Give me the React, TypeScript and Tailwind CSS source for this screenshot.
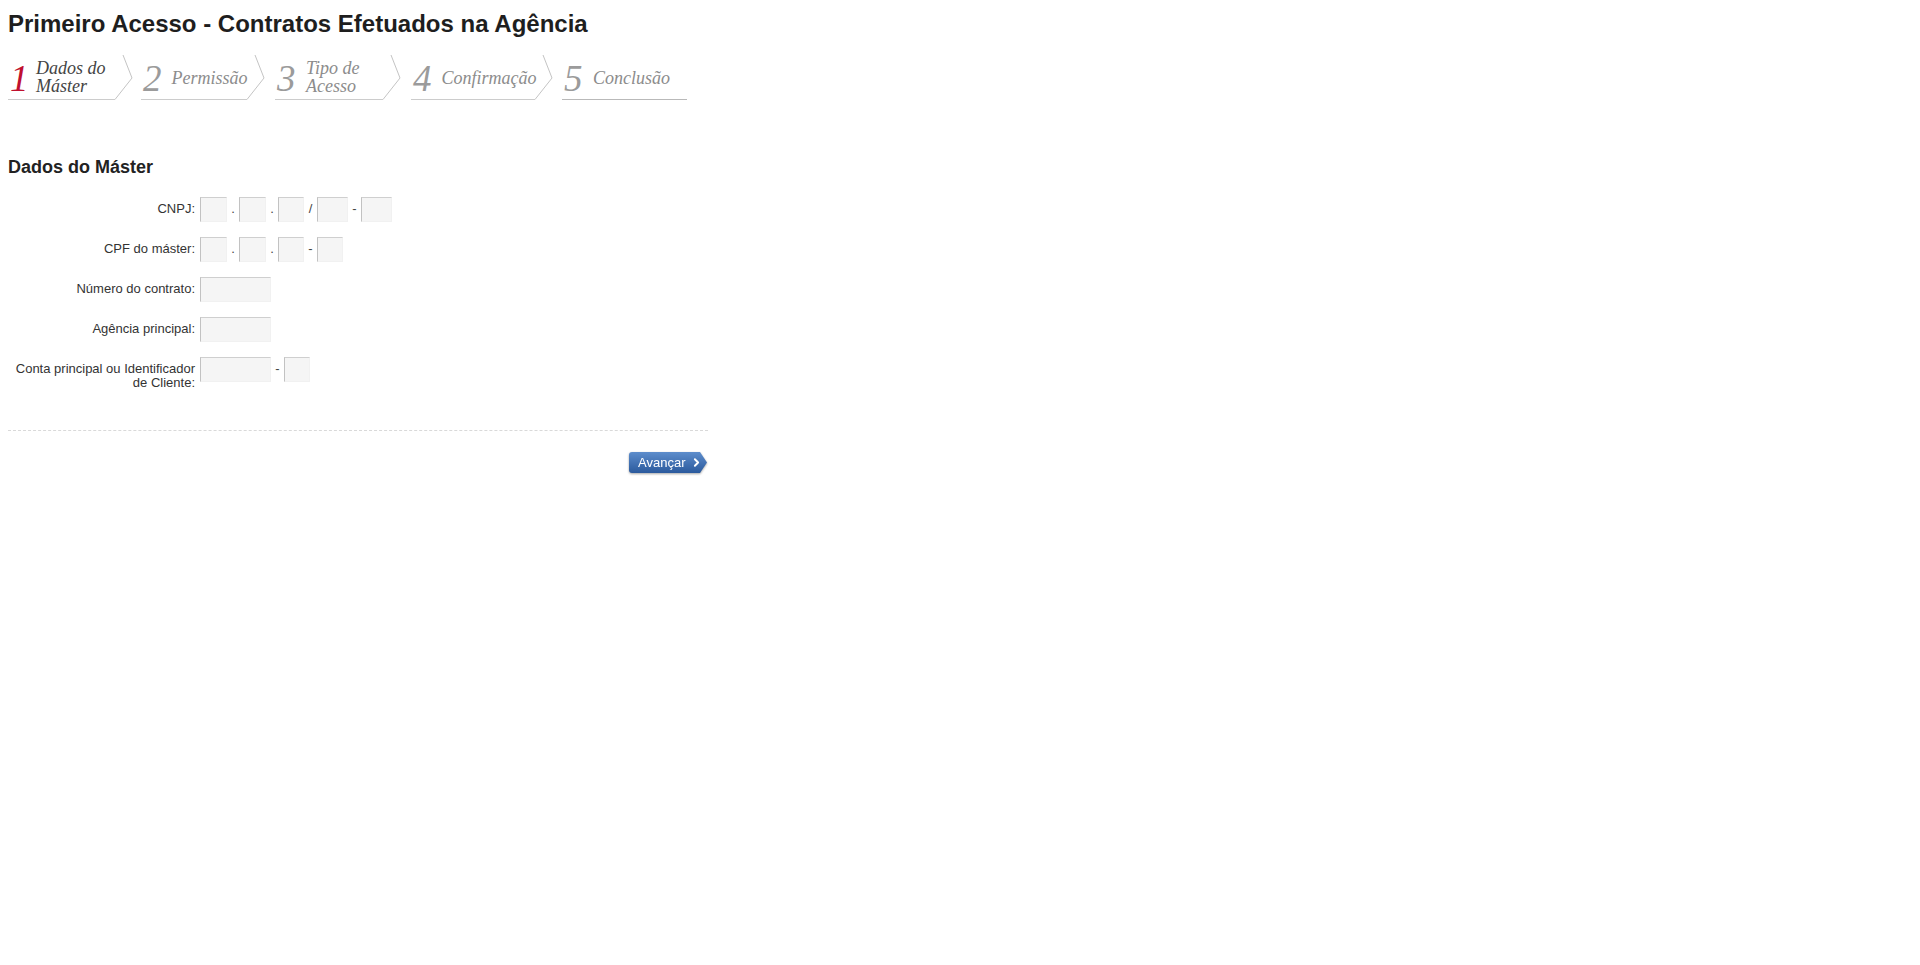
import { ChevronRight } from "lucide-react";

type Step = {
    num: string;
    lines: string[];
    width: string;
    gap: string;
    last?: boolean;
    active?: boolean;
};

const steps: Step[] = [
    { num: "1", lines: ["Dados do", "Máster"], width: "w-[107px]", gap: "mr-[8px]", active: true },
    { num: "2", lines: ["Permissão"], width: "w-[106px]", gap: "mr-[10px]" },
    { num: "3", lines: ["Tipo de", "Acesso"], width: "w-[108px]", gap: "mr-[10px]" },
    { num: "4", lines: ["Confirmação"], width: "w-[124px]", gap: "mr-[9px]" },
    { num: "5", lines: ["Conclusão"], width: "w-[125px]", gap: "", last: true },
];

const Field = ({ w }: { w: string }) => (
    <div className={`h-[25px] ${w} border border-t-[#cfcfcf] border-l-[#c2c2c2] border-r-[#f1f1f1] border-b-[#f1f1f1] bg-[#f5f5f5]`} />
);

const Sep = ({ c, w = "w-[12px]" }: { c: string; w?: string }) => (
    <span className={`${w} pt-[5px] text-center text-[13px] leading-[14px] text-[#444]`}>{c}</span>
);

const Row = ({ label, children }: { label: string[]; children: React.ReactNode }) => (
    <div className="flex h-[25px] items-start">
        <div className="w-[187px] pt-[5px] text-right text-[13px] leading-[14px] text-[#333]">
            {label.map((l) => (
                <div key={l}>{l}</div>
            ))}
        </div>
        <div className="ml-[5px] flex items-start">{children}</div>
    </div>
);

export default function App() {
    return (
        <div className="min-h-screen bg-white pl-[8px] font-['Liberation_Sans',Arial,sans-serif]">
            <h1 className="pt-[12px] text-[24px] font-bold leading-[24px] text-[#1e1e1e]">
                Primeiro Acesso - Contratos Efetuados na Agência
            </h1>

            {/* passos */}
            <div className="mt-[17px] flex">
                {steps.map((s) => (
                    <div key={s.num} className={`flex ${s.gap}`}>
                        <div
                            className={`flex h-[47px] ${s.width} items-start border-b ${s.last ? "border-[#b9b9b9]" : "border-[#cccccc]"} pl-[2px] font-['Liberation_Serif',Georgia,serif] italic`}
                        >
                            <span
                                className={`mt-[7px] text-[37px] leading-[37px] ${s.active ? "w-[16px] text-[#c0102f]" : "w-[19px] text-[#9b9b9b]"}`}
                            >
                                {s.num}
                            </span>
                            <div
                                className={`ml-[10px] text-[18px] ${s.lines.length > 1 ? "mt-[6px] leading-[18px]" : "mt-[17px] leading-[16px]"} ${s.active ? "text-[#444]" : "text-[#8c8c8c]"}`}
                            >
                                {s.lines.map((l) => (
                                    <div key={l}>{l}</div>
                                ))}
                            </div>
                        </div>
                        {!s.last && (
                            <svg width="18" height="47" viewBox="0 0 18 47" className="block">
                                <polyline points="0,46.5 17,25 8,2" fill="none" stroke="#c4c4c4" strokeWidth="1" />
                            </svg>
                        )}
                    </div>
                ))}
            </div>

            <h2 className="mt-[59px] text-[18px] font-bold leading-[17px] text-[#222]">Dados do Máster</h2>

            <div className="mt-[21px] flex w-[700px] flex-col gap-[15px]">
                <Row label={["CNPJ:"]}>
                    <Field w="w-[27px]" />
                    <Sep c="." />
                    <Field w="w-[27px]" />
                    <Sep c="." />
                    <Field w="w-[26px]" />
                    <Sep c="/" w="w-[13px]" />
                    <Field w="w-[31px]" />
                    <Sep c="-" w="w-[13px]" />
                    <Field w="w-[31px]" />
                </Row>
                <Row label={["CPF do máster:"]}>
                    <Field w="w-[27px]" />
                    <Sep c="." />
                    <Field w="w-[27px]" />
                    <Sep c="." />
                    <Field w="w-[26px]" />
                    <Sep c="-" w="w-[13px]" />
                    <Field w="w-[26px]" />
                </Row>
                <Row label={["Número do contrato:"]}>
                    <Field w="w-[71px]" />
                </Row>
                <Row label={["Agência principal:"]}>
                    <Field w="w-[71px]" />
                </Row>
                <Row label={["Conta principal ou Identificador", "de Cliente:"]}>
                    <Field w="w-[71px]" />
                    <Sep c="-" w="w-[13px]" />
                    <Field w="w-[26px]" />
                </Row>
            </div>

            <div className="mt-[48px] w-[700px] border-t border-dashed border-[#d9d9d9]" />

            <div className="mt-[21px] flex w-[700px] justify-end pr-[1px]">
                <div className="drop-shadow-[0_1px_1px_rgba(0,0,0,0.35)]">
                    <button className="flex h-[21px] w-[78px] items-center rounded-l-[3px] bg-gradient-to-b from-[#5d8dcc] to-[#2b5a9d] pl-[9px] text-[13px] text-white [clip-path:polygon(0_0,calc(100%-7px)_0,100%_50%,calc(100%-7px)_100%,0_100%)]">
                        Avançar
                        <ChevronRight className="ml-[5px] h-[13px] w-[13px]" strokeWidth={3.5} />
                    </button>
                </div>
            </div>
        </div>
    );
}
